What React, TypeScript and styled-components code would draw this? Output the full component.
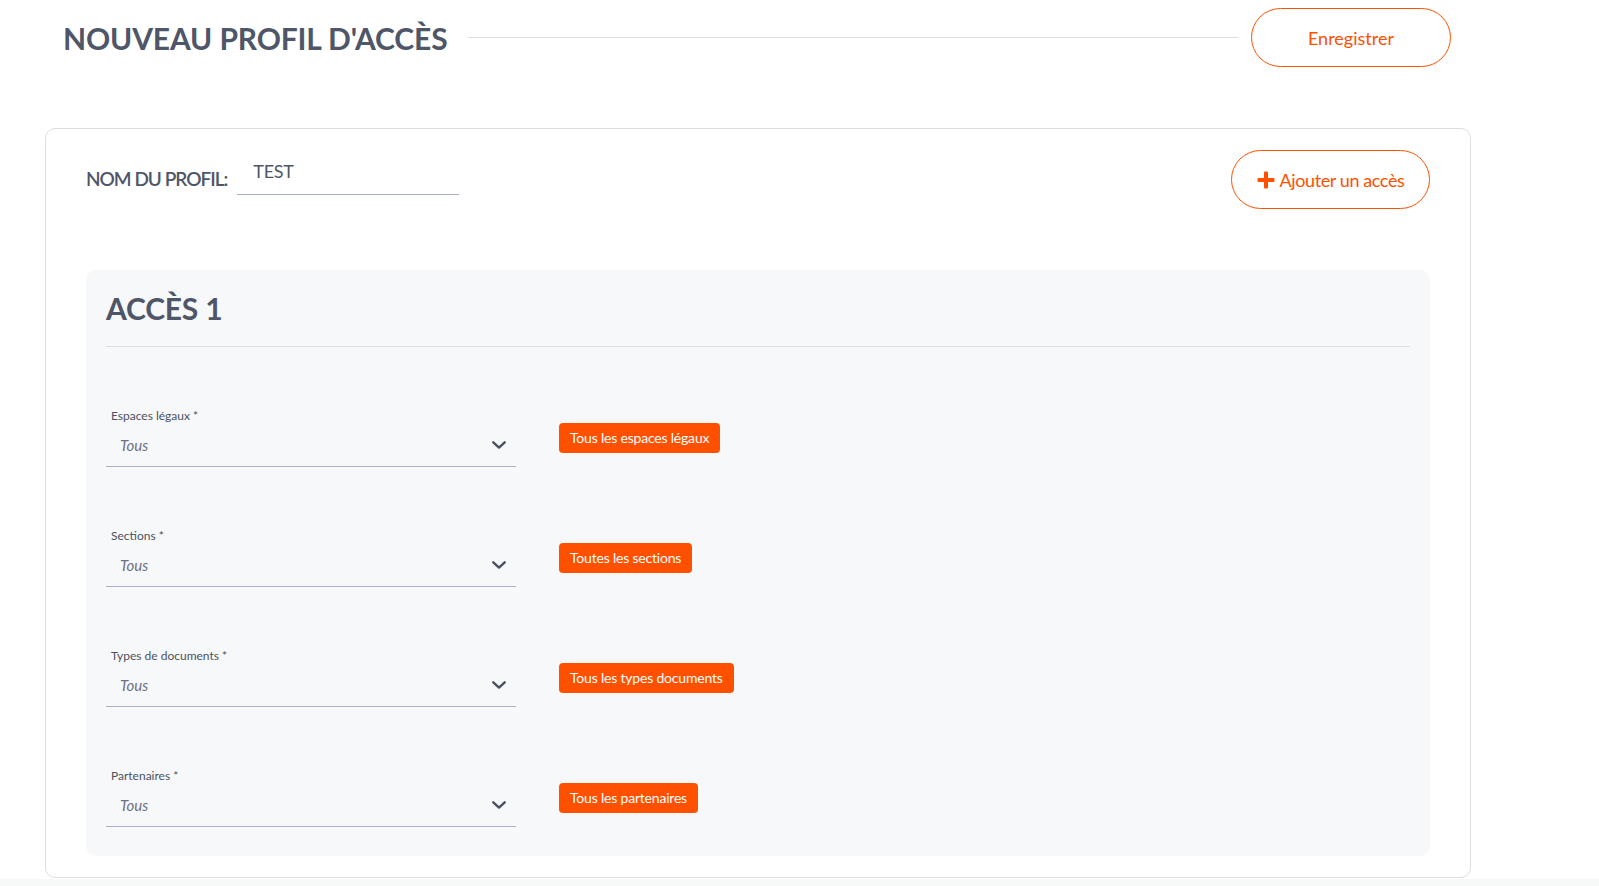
import React from "react";
import styled, { createGlobalStyle } from "styled-components";

const GlobalStyle = createGlobalStyle`
  html, body {
    margin: 0;
    padding: 0;
    background: #f7f8f8;
    font-family: Lato, "Noto Sans", "Liberation Sans", sans-serif;
  }
  * { box-sizing: border-box; }
`;

const ORANGE = "#ff5000";
const INK = "#4e5668";

const Page = styled.div`
  background: #ffffff;
  padding: 8px 0 1px 45px;
  width: 100%;
`;

const Header = styled.header`
  display: flex;
  align-items: center;
  width: 1406px;
  padding-left: 18px;
`;

const PageTitle = styled.h1`
  margin: 0;
  font-size: 30px;
  line-height: 36px;
  font-weight: 700;
  letter-spacing: -0.15px;
  color: ${INK};
  white-space: nowrap;
`;

const HeaderRule = styled.div`
  flex: 1;
  height: 1px;
  background: #dcdde5;
  margin: 0 13px 0 21px;
`;

const PillButton = styled.button<{ $width: number; $tight?: boolean }>`
  display: inline-flex;
  align-items: center;
  justify-content: center;
  gap: 5px;
  width: ${(p) => p.$width}px;
  height: 59px;
  border: 1px solid ${ORANGE};
  border-radius: 30px;
  background: #ffffff;
  color: ${ORANGE};
  font-family: Lato, "Noto Sans", sans-serif;
  font-size: 18px;
  font-weight: 400;
  letter-spacing: ${(p) => (p.$tight ? "-0.4px" : "0")};
  cursor: pointer;
  padding: 0;
`;

const Card = styled.section`
  margin-top: 61px;
  width: 1426px;
  border: 1px solid #dcdee4;
  border-radius: 10px;
  padding: 21px 40px 21px 40px;
  background: #ffffff;
`;

const TopRow = styled.div`
  display: flex;
  align-items: center;
  justify-content: space-between;
`;

const NameGroup = styled.div`
  display: flex;
  align-items: center;
  gap: 10px;
`;

const NameLabel = styled.label`
  font-size: 19px;
  line-height: 23px;
  font-weight: 600;
  letter-spacing: -1px;
  color: ${INK};
  margin-bottom: 2px;
`;

const NameInput = styled.div`
  width: 222px;
  padding: 2px 16px 12px;
  margin-bottom: 6px;
  line-height: 22px;
  font-size: 18px;
  letter-spacing: -0.3px;
  color: ${INK};
  border-bottom: 1px solid #a9b1c2;
`;

const Panel = styled.div`
  margin-top: 61px;
  background: #f7f8fa;
  border-radius: 10px;
  padding: 20px 20px 29px;
`;

const PanelTitle = styled.h2`
  margin: 0;
  font-size: 30px;
  line-height: 36px;
  font-weight: 700;
  letter-spacing: -0.2px;
  color: ${INK};
`;

const Divider = styled.hr`
  margin: 20px 0 0;
  border: 0;
  height: 1px;
  background: #dcdee4;
`;

const Rows = styled.div`
  margin-top: 61px;
  display: flex;
  flex-direction: column;
  gap: 61px;
`;

const Row = styled.div`
  display: flex;
  align-items: center;
  gap: 43px;
`;

const Field = styled.div`
  width: 410px;
  display: flex;
  flex-direction: column;
`;

const FieldLabel = styled.span`
  padding-left: 5px;
  font-size: 12px;
  line-height: 15px;
  color: #4a5160;
`;

const SelectBox = styled.div`
  height: 44px;
  display: flex;
  align-items: center;
  justify-content: space-between;
  padding: 0 10px 0 14px;
  border-bottom: 1px solid #a9b1c2;
`;

const SelectValue = styled.span`
  font-size: 15px;
  line-height: 18px;
  font-style: italic;
  color: #6b7180;
`;

const Badge = styled.span`
  display: inline-flex;
  align-items: center;
  height: 30px;
  padding: 0 11px;
  border-radius: 4px;
  background: ${ORANGE};
  color: #ffffff;
  font-size: 14px;
  letter-spacing: -0.2px;
  white-space: nowrap;
`;

const Chevron = () => (
  <svg width="14" height="8" viewBox="0 0 14 8" fill="none">
    <path d="M1.3 1.3 L7 6.6 L12.7 1.3" stroke="#4a5160" strokeWidth="2.4" strokeLinecap="round" strokeLinejoin="round" />
  </svg>
);

const PlusIcon = () => (
  <svg width="18" height="18" viewBox="0 0 18 18">
    <rect x="7" y="0.5" width="4" height="17" rx="1" fill={ORANGE} />
    <rect x="0.5" y="7" width="17" height="4" rx="1" fill={ORANGE} />
  </svg>
);

const fields = [
  { label: "Espaces légaux *", badge: "Tous les espaces légaux" },
  { label: "Sections *", badge: "Toutes les sections" },
  { label: "Types de documents *", badge: "Tous les types documents" },
  { label: "Partenaires *", badge: "Tous les partenaires" },
];

export default function App() {
  return (
    <>
      <GlobalStyle />
      <Page>
        <Header>
          <PageTitle>NOUVEAU PROFIL D'ACCÈS</PageTitle>
          <HeaderRule />
          <PillButton $width={200}>Enregistrer</PillButton>
        </Header>
        <Card>
          <TopRow>
            <NameGroup>
              <NameLabel>NOM DU PROFIL:</NameLabel>
              <NameInput>TEST</NameInput>
            </NameGroup>
            <PillButton $width={199} $tight>
              <PlusIcon />
              Ajouter un accès
            </PillButton>
          </TopRow>
          <Panel>
            <PanelTitle>ACCÈS 1</PanelTitle>
            <Divider />
            <Rows>
              {fields.map((f) => (
                <Row key={f.label}>
                  <Field>
                    <FieldLabel>{f.label}</FieldLabel>
                    <SelectBox>
                      <SelectValue>Tous</SelectValue>
                      <Chevron />
                    </SelectBox>
                  </Field>
                  <Badge>{f.badge}</Badge>
                </Row>
              ))}
            </Rows>
          </Panel>
        </Card>
      </Page>
    </>
  );
}
